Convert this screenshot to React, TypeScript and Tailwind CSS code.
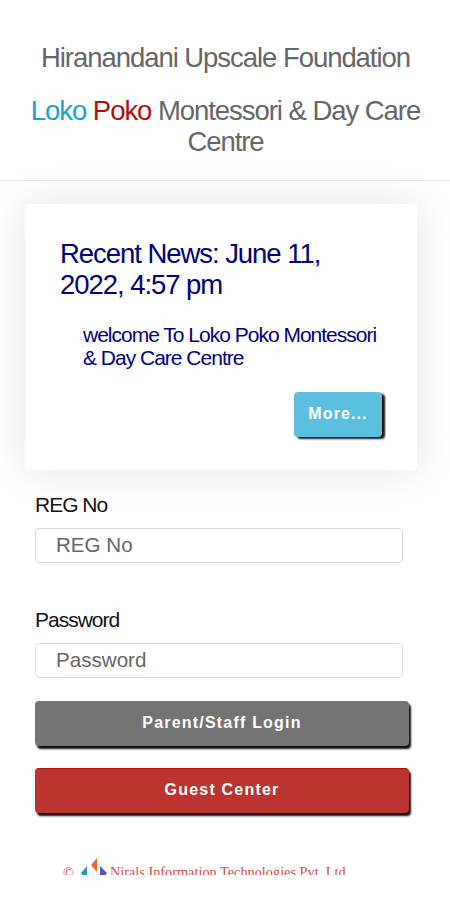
import { useState } from "react";

const actionButton =
  "block h-[45px] w-[374px] rounded-[4px] text-center text-[16px] font-bold tracking-[1.2px] text-white shadow-[2px_3px_2px_#111]";

function FooterLogo() {
  return (
    <svg width="27" height="23" viewBox="0 0 27 23" className="shrink-0">
      <path d="M16 0v14l-6-7z" fill="#f4622c" />
      <path d="M6 8v15l-6-8z" fill="#2499ab" />
      <path d="M19 8v15l7-8z" fill="#5b50c0" />
    </svg>
  );
}

export default function App() {
  const [regNo, setRegNo] = useState("");
  const [password, setPassword] = useState("");

  return (
    <div className="h-[900px] w-[450px] overflow-hidden bg-white font-['Liberation_Sans',Arial,sans-serif]">
      {/* Header */}
      <header className="h-[181px] border-b border-[#e9e9e9] pt-[42px] pl-px text-center text-[27.5px] leading-[31px] tracking-[-1.05px] text-[#666]">
        <h1>Hiranandani Upscale Foundation</h1>
        <h2 className="mt-[22px]">
          <span className="text-[#1ba1d6]">Loko</span> <span className="text-[#b50d10]">Poko</span> Montessori &amp; Day Care
          <br />
          Centre
        </h2>
      </header>

      {/* Recent news */}
      <section className="mt-[23px] ml-[25px] flex h-[266px] w-[392px] flex-col rounded-[3px] bg-white pt-[34px] pl-[35px] text-[#000080] shadow-[0_0_45px_rgba(0,0,0,0.11)]">
        <h3 className="text-[27.5px] leading-[31px] tracking-[-1.05px]">
          Recent News: June 11,
          <br />
          2022, 4:57 pm
        </h3>
        <p className="mt-[23px] ml-[23px] text-[21px] leading-[23px] tracking-[-1px]">
          welcome To Loko Poko Montessori
          <br />
          &amp; Day Care Centre
        </p>
        <button className="mt-[23px] ml-[234px] h-[45px] w-[88px] rounded-[4px] bg-[#5bc0de] pb-[2px] text-[16px] font-bold tracking-[1.1px] text-white shadow-[3px_2px_2px_#111]">
          More...
        </button>
      </section>

      {/* Login form */}
      <form className="relative ml-[35px]" onSubmit={(e) => e.preventDefault()}>
        <label htmlFor="reg" className="block pt-[23px] text-[21px] leading-[24px] tracking-[-1px] text-[#111]">
          REG No
        </label>
        <input
          id="reg"
          value={regNo}
          onChange={(e) => setRegNo(e.target.value)}
          placeholder="REG No"
          className="mt-[11px] block h-[35px] w-[368px] rounded-[4px] border border-[#d8d8d8] bg-white px-[20px] pb-[2px] text-[20.6px] placeholder:text-[#666]"
        />
        <label htmlFor="password" className="mt-[45px] block text-[21px] leading-[24px] tracking-[-1px] text-[#111]">
          Password
        </label>
        <input
          id="password"
          type="password"
          value={password}
          onChange={(e) => setPassword(e.target.value)}
          placeholder="Password"
          className="mt-[11px] block h-[35px] w-[368px] rounded-[4px] border border-[#dedede] bg-white px-[20px] pb-[2px] text-[20.6px] placeholder:text-[#666]"
        />
        <button type="submit" className={`${actionButton} mt-[23px] bg-[#737373] pb-[2px]`}>
          Parent/Staff Login
        </button>
        <button type="button" className={`${actionButton} mt-[22px] border-t border-[#b50d10] bg-[#bb342f] pb-[3px]`}>
          Guest Center
        </button>
      </form>

      {/* Footer, cut off by the bottom edge */}
      <footer className="mt-[45px] ml-[63px] flex h-[17px] items-start overflow-hidden font-['Liberation_Serif',serif] text-[14.3px] text-[#d14b48]">
        <span className="mt-[7px] leading-[17px]">©</span>
        <span className="ml-[7px]">
          <FooterLogo />
        </span>
        <span className="mt-[6px] ml-[2px] leading-[17px] whitespace-nowrap">Nirals Information Technologies Pvt. Ltd</span>
      </footer>
    </div>
  );
}
